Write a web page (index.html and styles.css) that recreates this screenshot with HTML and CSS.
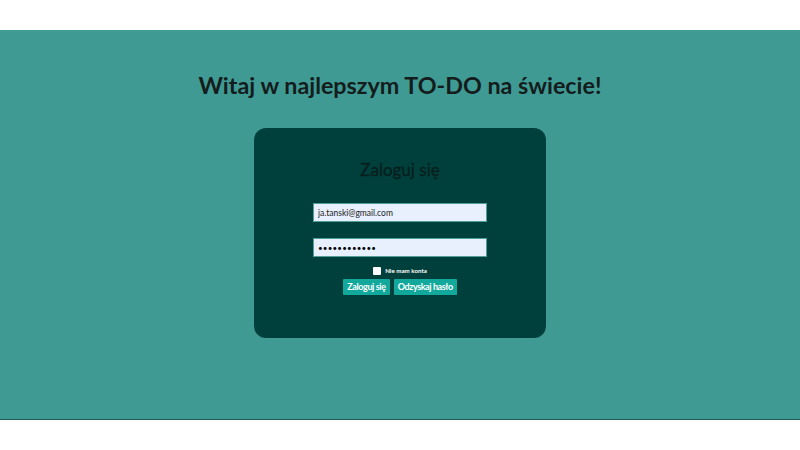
FILE: index.html
```html
<!DOCTYPE html>
<html lang="pl">
<head>
<meta charset="utf-8">
<title>TO-DO</title>
<link rel="stylesheet" href="styles.css">
</head>
<body>
<div class="top"></div>
<main class="main">
  <h1 class="title">Witaj w najlepszym TO-DO na świecie!</h1>
  <form class="card">
    <h2 class="card-title">Zaloguj się</h2>
    <input class="field" type="email" value="ja.tanski@gmail.com">
    <input class="field pass" type="password" value="••••••••••••">
    <label class="check"><span class="box"></span><span>Nie mam konta</span></label>
    <div class="buttons">
      <button type="button" class="btn">Zaloguj się</button>
      <button type="button" class="btn">Odzyskaj hasło</button>
    </div>
  </form>
</main>
<div class="bottom"></div>
</body>
</html>
```

FILE: styles.css
```css
html, body {
  margin: 0;
  padding: 0;
  background: #ffffff;
  font-family: Lato, "Open Sans", sans-serif;
}
.top {
  height: 30px;
  background: #ffffff;
}
.main {
  height: 389px;
  background: #3f9a94;
  border-bottom: 1px solid #1f5e58;
  display: flex;
  flex-direction: column;
  align-items: center;
}
.title {
  margin: 40px 0 0;
  font-size: 23.3px;
  font-weight: 700;
  color: #141c1c;
  line-height: 30px;
}
.card {
  margin-top: 28px;
  width: 292px;
  height: 210px;
  box-sizing: border-box;
  background: #00403c;
  border-radius: 12px;
  display: flex;
  flex-direction: column;
  align-items: center;
  padding-top: 30px;
}
.card-title {
  margin: 0;
  font-size: 17px;
  font-weight: 400;
  color: #061e1c;
  line-height: 24px;
  -webkit-text-stroke: 0.3px #061e1c;
}
.field {
  margin-top: 21px;
  width: 174px;
  height: 19px;
  box-sizing: border-box;
  border: 1px solid #4f9f98;
  background: #e8f0fe;
  font-family: Lato, sans-serif;
  font-size: 8.5px;
  color: #222;
  padding: 0 4px;
  outline: none;
}
.field.pass {
  margin-top: 16px;
  font-size: 8px;
  letter-spacing: 0.2px;
  color: #000;
}
.check {
  margin-top: 9px;
  display: flex;
  align-items: center;
  gap: 4px;
  font-size: 6.2px;
  font-weight: 700;
  color: #ffffff;
  line-height: 9px;
}
.box {
  width: 8px;
  height: 8px;
  background: #ffffff;
  border-radius: 1px;
}
.buttons {
  margin-top: 4px;
  display: flex;
  gap: 4px;
}
.btn {
  height: 16px;
  padding: 0 4px;
  border: none;
  border-radius: 1px;
  background: #13a89c;
  color: #ffffff;
  font-family: Lato, sans-serif;
  font-size: 9px;
  letter-spacing: -0.4px;
  font-weight: 700;
  line-height: 16px;
}
.bottom {
  height: 30px;
}
```
